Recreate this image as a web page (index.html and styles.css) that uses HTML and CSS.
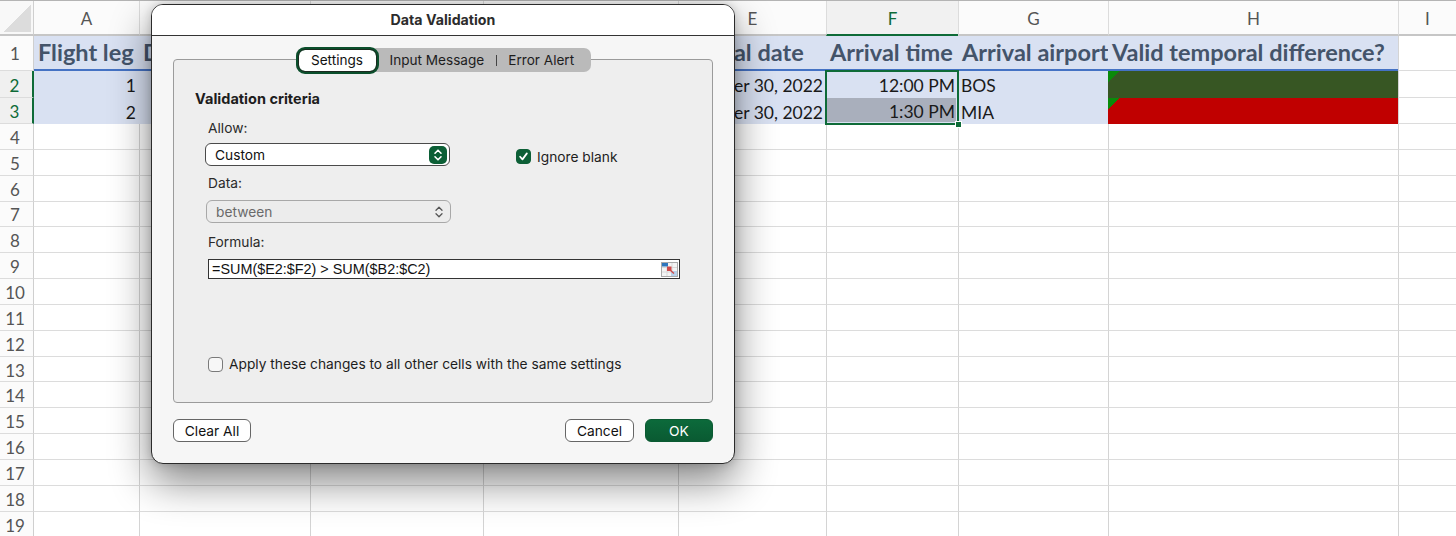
FILE: index.html
```html
<!DOCTYPE html>
<html lang="en">
<head>
<meta charset="utf-8">
<title>Data Validation</title>
<link rel="stylesheet" href="styles.css">
</head>
<body>
<main class="sheet">
  <div class="corner"></div><div class="ch ch-first">A</div><div class="ch">B</div><div class="ch"></div><div class="ch">D</div><div class="ch">E</div><div class="ch ch-active">F</div><div class="ch">G</div><div class="ch">H</div><div class="ch">I</div>

  <div class="rh rh-first">1</div><div class="c th">Flight leg</div><div class="c th">Departure date</div><div class="c th"></div><div class="c th"></div><div class="c th">Arrival date</div><div class="c th">Arrival time</div><div class="c th">Arrival airport</div><div class="c th">Valid temporal difference?</div><div class="c"></div>

  <div class="rh rh-active">2</div><div class="c td num">1</div><div class="c td"></div><div class="c td"></div><div class="c td"></div><div class="c td num">November 30, 2022</div><div class="c td num">12:00 PM</div><div class="c td">BOS</div><div class="c flag ok"></div><div class="c"></div>

  <div class="rh rh-active">3</div><div class="c td num">2</div><div class="c td"></div><div class="c td"></div><div class="c td"></div><div class="c td num">November 30, 2022</div><div class="c td num cur">1:30 PM</div><div class="c td">MIA</div><div class="c flag bad"></div><div class="c"></div>

  <div class="rh">4</div><div class="c"></div><div class="c"></div><div class="c"></div><div class="c"></div><div class="c"></div><div class="c"></div><div class="c"></div><div class="c"></div><div class="c"></div>
  <div class="rh">5</div><div class="c"></div><div class="c"></div><div class="c"></div><div class="c"></div><div class="c"></div><div class="c"></div><div class="c"></div><div class="c"></div><div class="c"></div>
  <div class="rh">6</div><div class="c"></div><div class="c"></div><div class="c"></div><div class="c"></div><div class="c"></div><div class="c"></div><div class="c"></div><div class="c"></div><div class="c"></div>
  <div class="rh">7</div><div class="c"></div><div class="c"></div><div class="c"></div><div class="c"></div><div class="c"></div><div class="c"></div><div class="c"></div><div class="c"></div><div class="c"></div>
  <div class="rh">8</div><div class="c"></div><div class="c"></div><div class="c"></div><div class="c"></div><div class="c"></div><div class="c"></div><div class="c"></div><div class="c"></div><div class="c"></div>
  <div class="rh">9</div><div class="c"></div><div class="c"></div><div class="c"></div><div class="c"></div><div class="c"></div><div class="c"></div><div class="c"></div><div class="c"></div><div class="c"></div>
  <div class="rh">10</div><div class="c"></div><div class="c"></div><div class="c"></div><div class="c"></div><div class="c"></div><div class="c"></div><div class="c"></div><div class="c"></div><div class="c"></div>
  <div class="rh">11</div><div class="c"></div><div class="c"></div><div class="c"></div><div class="c"></div><div class="c"></div><div class="c"></div><div class="c"></div><div class="c"></div><div class="c"></div>
  <div class="rh">12</div><div class="c"></div><div class="c"></div><div class="c"></div><div class="c"></div><div class="c"></div><div class="c"></div><div class="c"></div><div class="c"></div><div class="c"></div>
  <div class="rh">13</div><div class="c"></div><div class="c"></div><div class="c"></div><div class="c"></div><div class="c"></div><div class="c"></div><div class="c"></div><div class="c"></div><div class="c"></div>
  <div class="rh">14</div><div class="c"></div><div class="c"></div><div class="c"></div><div class="c"></div><div class="c"></div><div class="c"></div><div class="c"></div><div class="c"></div><div class="c"></div>
  <div class="rh">15</div><div class="c"></div><div class="c"></div><div class="c"></div><div class="c"></div><div class="c"></div><div class="c"></div><div class="c"></div><div class="c"></div><div class="c"></div>
  <div class="rh">16</div><div class="c"></div><div class="c"></div><div class="c"></div><div class="c"></div><div class="c"></div><div class="c"></div><div class="c"></div><div class="c"></div><div class="c"></div>
  <div class="rh">17</div><div class="c"></div><div class="c"></div><div class="c"></div><div class="c"></div><div class="c"></div><div class="c"></div><div class="c"></div><div class="c"></div><div class="c"></div>
  <div class="rh">18</div><div class="c"></div><div class="c"></div><div class="c"></div><div class="c"></div><div class="c"></div><div class="c"></div><div class="c"></div><div class="c"></div><div class="c"></div>
  <div class="rh">19</div><div class="c"></div><div class="c"></div><div class="c"></div><div class="c"></div><div class="c"></div><div class="c"></div><div class="c"></div><div class="c"></div><div class="c"></div>

  <div class="selection"><span class="handle"></span></div>
</main>

<section class="dialog" aria-label="Data Validation">
  <header class="titlebar">Data Validation</header>
  <div class="dialog-body">
    <div class="tabs">
      <span class="tab tab-on">Settings</span>
      <span class="tab tab-input">Input Message</span>
      <span class="tab-sep"></span>
      <span class="tab tab-error">Error Alert</span>
    </div>
    <div class="panel">
      <h2 class="group-title">Validation criteria</h2>
      <div class="label">Allow:</div>
      <div class="allow-row">
        <div class="select">
          <span>Custom</span>
          <span class="stepper">
            <svg width="10" height="14" viewBox="0 0 10 14"><path d="M2 5.2 5 2.2 8 5.2M2 8.8 5 11.8 8 8.8" fill="none" stroke="#fff" stroke-width="1.6" stroke-linecap="round" stroke-linejoin="round"/></svg>
          </span>
        </div>
        <label class="check check-ignore">
          <span class="box box-on">
            <svg width="15" height="15" viewBox="0 0 15 15"><path d="M3.6 7.8 6.3 10.8 11.4 3.9" fill="none" stroke="#fff" stroke-width="2" stroke-linecap="round" stroke-linejoin="round"/></svg>
          </span>
          <span>Ignore blank</span>
        </label>
      </div>
      <div class="label label-data">Data:</div>
      <div class="select select-off">
        <span>between</span>
        <span class="stepper-off">
          <svg width="10" height="14" viewBox="0 0 10 14"><path d="M2 5.2 5 2.2 8 5.2M2 8.8 5 11.8 8 8.8" fill="none" stroke="#555" stroke-width="1.3" stroke-linecap="round" stroke-linejoin="round"/></svg>
        </span>
      </div>
      <div class="label label-formula">Formula:</div>
      <div class="formula">
        <span>=SUM($E2:$F2) &gt; SUM($B2:$C2)</span>
        <svg class="ref" width="17" height="15" viewBox="0 0 17 15">
          <rect x=".5" y=".5" width="16" height="14" fill="#f4f4f4" stroke="#a9a9a9"/>
          <path d="M1 5.5H16M1 10H16M6 1V14M11 1V14" stroke="#d8d8d8"/>
          <rect x="1" y="1" width="6" height="3.5" fill="#2f76bd"/>
          <rect x="10" y="9" width="6" height="5" fill="#b9d2ea"/>
          <path d="M6 4.5H10.5V9H6Z" fill="#cf4a4a"/>
          <path d="M9 8 13 11.5" stroke="#cf4a4a" stroke-width="1.4"/>
        </svg>
      </div>
      <label class="check check-apply">
        <span class="box"></span>
        <span>Apply these changes to all other cells with the same settings</span>
      </label>
    </div>
    <footer class="actions">
      <button class="btn btn-clear">Clear All</button>
      <span class="spring"></span>
      <button class="btn btn-cancel">Cancel</button>
      <button class="btn btn-ok">OK</button>
    </footer>
  </div>
</section>
</body>
</html>
```

FILE: styles.css
```css
* { box-sizing: border-box; }
html, body { margin: 0; width: 1456px; height: 536px; overflow: hidden; background: #fff; }
body { position: relative; }

.sheet {
  position: relative;
  display: grid;
  grid-template-columns: 34px 105px 171px 173px 195px 148px 132px 150px 290px 58px;
  grid-template-rows: 35px 35px 27px 26px repeat(16, 25.85px);
  font-family: Lato, "Open Sans", sans-serif;
  border-top: 1px solid #b4b4b4;
  height: 536px;
  overflow: hidden;
}

.corner {
  background: #f8f8f8 linear-gradient(135deg, transparent 50%, #dcdcdc 50%) no-repeat 4px 4px / 27px 27px;
  border-right: 1px solid #cfcfcf;
  border-bottom: 2px solid #c6c6c6;
}
.ch {
  display: flex; align-items: center; justify-content: center;
  background: #fbfbfb;
  border-left: 1px solid #dcdcdc;
  border-bottom: 2px solid #c6c6c6;
  padding-top: 2px;
  font-size: 17px;
  color: #555;
}
.ch-first { border-left: 0; }
.ch-active { background: #f1f1f1; color: #0e6b38; border-bottom-color: #0e6b38; }
.rh {
  display: flex; align-items: center; justify-content: center;
  background: #fbfbfb;
  border-right: 1px solid #cfcfcf;
  border-bottom: 1px solid #dcdcdc;
  font-size: 17px;
  color: #555;
  padding: 2px 3px 0 0;
}
.rh-first { padding-top: 0; }
.rh-active { background: #f0f0f0; color: #0e6b38; border-right: 2px solid #0e6b38; }

.c {
  display: flex; align-items: center;
  min-width: 0;
  white-space: nowrap;
  border-left: 1px solid #d4d4d4;
  border-bottom: 1px solid #dcdcdc;
  background: #fff;
}
.rh + .c { border-left: 0; }
.th {
  background: #d9e1f2;
  border-left: 0;
  border-bottom: 2px solid #4472c4;
  padding: 0 0 2px 4px;
  color: #44546a;
  font-weight: 700;
  font-size: 23.5px;
}
.td {
  background: #d9e1f2;
  border-left: 0;
  border-bottom: 0;
  padding: 2px 3px 0;
  color: #1a1a1a;
  font-size: 17.5px;
}
.num { justify-content: flex-end; }
.cur {
  background: #a9afbc;
  border-right: 2px solid #d9e1f2;
  border-bottom: 2px solid #d9e1f2;
  padding-right: 1px;
}
.flag { position: relative; border-left: 0; border-bottom: 0; }
.flag::before {
  content: "";
  position: absolute; left: 0; top: 0;
  width: 11px; height: 11px;
  background: linear-gradient(135deg, #0a8a0a 50%, transparent 50%);
}
.ok { background: #375623; }
.bad { background: #c00000; }

.selection {
  position: absolute;
  grid-column: 7 / 8;
  grid-row: 3 / 5;
  inset: -1px;
  border: 2px solid #0e6b38;
  pointer-events: none;
}
.handle {
  position: absolute; right: -5px; bottom: -5px;
  width: 7px; height: 7px;
  background: #0e6b38;
  border: 1px solid #fff;
}

/* dialog */
.dialog {
  position: absolute;
  left: 151px; top: 4px;
  width: 584px; height: 460px;
  display: flex; flex-direction: column;
  background: #f6f6f6;
  border: 1px solid #2b2b2b;
  border-radius: 12px;
  box-shadow: 0 18px 40px rgba(0, 0, 0, .48), 0 0 10px rgba(0,0,0,.18);
  font-family: Inter, "Liberation Sans", sans-serif;
  font-size: 13.75px;
  color: #1d1d1d;
  overflow: hidden;
}
.titlebar {
  flex: none;
  height: 31px;
  display: flex; align-items: center; justify-content: center;
  background: #fff;
  border-bottom: 1px solid #333;
  font-weight: 700;
  font-size: 14.2px;
  color: #2c2c2c;
  padding-bottom: 2px;
}
.dialog-body {
  flex: 1;
  display: flex; flex-direction: column;
  padding: 12px 21px 21px 21px;
  min-height: 0;
}
.tabs {
  position: relative;
  z-index: 1;
  align-self: center;
  display: flex; align-items: center;
  height: 24px;
  margin-bottom: -13px;
  background: #bababa;
  border-radius: 7px;
  width: 295px;
  font-size: 13.6px;
}
.tab { white-space: nowrap; }
.tab-on {
  display: flex; align-items: center; justify-content: center;
  width: 83px; height: 27px;
  background: #fff;
  border: 3px solid #0b4f2c;
  outline: 1px solid #1b2b20;
  outline-offset: -3px;
  border-radius: 9px;
  color: #111;
}
.tab-input { margin-left: 11px; color: #1d1d1d; }
.tab-sep { width: 1px; height: 11px; background: #444; margin: 0 11px 0 12px; }
.tab-error { color: #1d1d1d; }

.panel {
  flex: none;
  height: 344px;
  background: #eeeeee;
  border: 1px solid #9b9b9b;
  border-radius: 4px;
  padding: 31px 21px 0 21px;
  display: flex; flex-direction: column; align-items: flex-start;
}
.group-title { margin: 0; font-size: 14.5px; line-height: 16px; font-weight: 700; color: #1d1d1d; }
.label { line-height: 16px; margin: 13px 0 0 13px; color: #2a2a2a; }
.allow-row { display: flex; align-items: center; margin-top: 7px; }
.select {
  display: flex; align-items: center; justify-content: space-between;
  width: 245px; height: 23px;
  margin-left: 10px;
  padding: 0 2px 0 9px;
  background: #fff;
  border: 1px solid #4a4a4a;
  border-radius: 6px;
  color: #111;
}
.select-off {
  margin-left: 11px; margin-top: 9px;
  background: #ececec;
  border-color: #a8a8a8;
  color: #6a6a6a;
  padding-right: 6px;
}
.stepper {
  display: flex; align-items: center; justify-content: center;
  width: 18px; height: 18px;
  border-radius: 5px;
  background: #0c5f36;
}
.stepper-off { display: flex; }
.check { display: flex; align-items: center; gap: 6px; color: #1d1d1d; }
.check-ignore { margin-left: 66px; margin-top: 4px; }
.box {
  flex: none;
  display: flex; align-items: center; justify-content: center;
  width: 15px; height: 15px;
  border-radius: 4px;
  border: 1px solid #7a7a7a;
  background: #f7f7f7;
}
.box-on { background: #0c5f36; border-color: #0c5f36; }
.label-data { margin-top: 9px; }
.label-formula { margin-top: 11px; }
.formula {
  display: flex; align-items: center; justify-content: space-between;
  width: 472px; height: 20px;
  margin: 9px 0 0 13px;
  padding: 0 1px 0 3px;
  background: #fff;
  border: 1px solid #333;
  font-family: "Liberation Sans", Arial, sans-serif;
  font-size: 14.4px;
  color: #111;
}
.ref { flex: none; }
.check-apply { margin: 77px 0 0 13px; }

.actions { display: flex; align-items: center; margin-top: 16px; }
.spring { flex: 1; }
.btn {
  height: 23px;
  padding: 0;
  background: #fff;
  border: 1px solid #666;
  border-radius: 6px;
  font: inherit;
  color: #111;
}
.btn-clear { width: 78px; }
.btn-cancel { width: 69px; }
.btn-ok {
  width: 68px;
  margin-left: 11px;
  background: linear-gradient(#0c6a3b, #0a5a32);
  border-color: #0a5a32;
  color: #fff;
}
```
